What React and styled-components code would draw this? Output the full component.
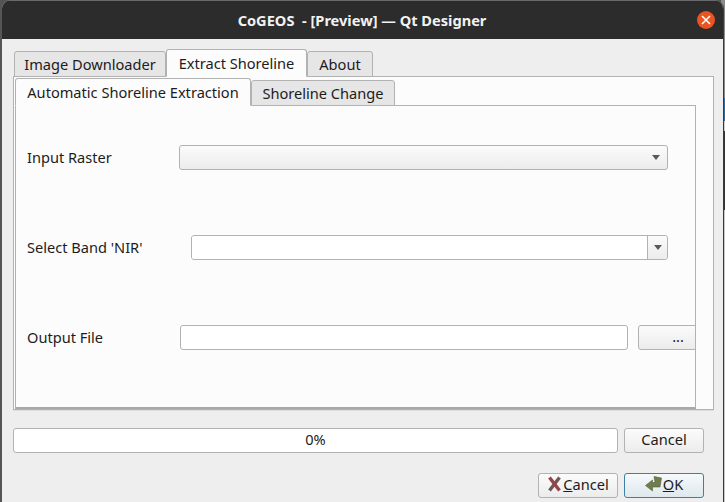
import React from "react";
import styled, { createGlobalStyle } from "styled-components";

const GlobalStyle = createGlobalStyle`
    html, body {
        margin: 0;
        padding: 0;
        width: 725px;
        height: 502px;
        overflow: hidden;
        background: #3b3b3b;
    }
    * {
        box-sizing: border-box;
    }
`;

// the desktop behind the window only shows in the last pixel column
const Screen = styled.div`
    width: 725px;
    height: 502px;
    padding-right: 1px;
    font-family: "Noto Sans", "Open Sans", sans-serif;
    font-size: 14.6px;
    color: #1c1c1c;
    background: linear-gradient(
        #8a8a8a 0 98px,
        #2a6f9e 98px 121px,
        #cfcfcf 121px 131px,
        #333333 131px 210px,
        #c8c8c8 210px
    );
`;

const Window = styled.div`
    height: 100%;
    display: flex;
    flex-direction: column;
    margin-left: 2px;
    border-radius: 9px 9px 0 0;
    border-right: 1px solid #3a3a3a;
    overflow: hidden;
    background: #eeeeee;
`;

const Desktop = styled.div`
    height: 100%;
    background: linear-gradient(90deg, #555555 0 721px, transparent 721px);
`;

const TitleBar = styled.div`
    position: relative;
    height: 39px;
    flex: none;
    display: flex;
    align-items: center;
    justify-content: center;
    padding-right: 1px;
    background: #2c2c2c;
    border-top: 1px solid #6a6a6a;
    color: #f2f2f2;
    font-weight: 700;
    white-space: pre;
`;

const CloseButton = styled.div`
    position: absolute;
    right: 8px;
    top: 10px;
    width: 18px;
    height: 18px;
    border-radius: 50%;
    background: #e95420;
    display: flex;
    align-items: center;
    justify-content: center;
`;

const Body = styled.div`
    flex: 1;
    display: flex;
    flex-direction: column;
    padding: 10px 9px 0 11px;
`;

const TabBar = styled.div`
    display: flex;
    align-items: flex-end;
    height: ${(p) => p.$height}px;
    padding-left: 1px;
    margin-bottom: -1px;
    position: relative;
    z-index: 1;
`;

const Tab = styled.div`
    width: ${(p) => p.$width}px;
    height: ${(p) => (p.$active ? p.$height + 2 : p.$height)}px;
    display: flex;
    align-items: center;
    justify-content: center;
    white-space: nowrap;
    padding-bottom: 1px;
    border: 1px solid #b2b2b2;
    border-radius: 3px 3px 0 0;
    background: ${(p) => (p.$active ? "#fcfcfc" : "#e6e6e6")};
    border-bottom-color: ${(p) => (p.$active ? "#fcfcfc" : "#b2b2b2")};
`;

const OuterPane = styled.div`
    height: 334px;
    border: 1px solid #b2b2b2;
    background: #fcfcfc;
    padding: 1px 17px 0 1px;
    box-shadow: 0 1px 0 #dcdcdc;
`;

const InnerTabBar = styled(TabBar)`
    padding-left: 0;
`;

const InnerPane = styled.div`
    height: 304px;
    border: 1px solid #b2b2b2;
    border-bottom: 2px solid #a8a8a8;
    background: #fcfcfc;
    overflow: hidden;
    padding: 39px 0 0 11px;
    display: flex;
    flex-direction: column;
    gap: 65px;
`;

const FormRow = styled.div`
    display: flex;
    align-items: center;
    height: 25px;
    flex: none;
`;

const Label = styled.div`
    width: ${(p) => p.$width}px;
    flex: none;
    padding-bottom: 2px;
    white-space: nowrap;
`;

const ComboBox = styled.div`
    width: ${(p) => p.$width}px;
    height: 25px;
    flex: none;
    display: flex;
    align-items: center;
    justify-content: flex-end;
    border: 1px solid #b2b2b2;
    border-radius: 3px;
    background: linear-gradient(#fbfbfb, #ececec);
    padding-right: 7px;
`;

const ComboField = styled.div`
    flex: 1;
    align-self: stretch;
    background: #ffffff;
    border-right: 1px solid #b2b2b2;
    border-radius: 3px 0 0 3px;
`;

const ComboDrop = styled.div`
    width: 19px;
    flex: none;
    align-self: stretch;
    display: flex;
    align-items: center;
    justify-content: center;
    background: linear-gradient(#fbfbfb, #ececec);
    border-radius: 0 3px 3px 0;
`;

const EditableCombo = styled(ComboBox)`
    padding-right: 0;
    background: #ffffff;
`;

const Arrow = styled.div`
    width: 0;
    height: 0;
    border-left: 4px solid transparent;
    border-right: 4px solid transparent;
    border-top: 5px solid #5a5a5a;
`;

const TextInput = styled.div`
    width: 448px;
    height: 25px;
    flex: none;
    background: #ffffff;
    border: 1px solid #b2b2b2;
    border-radius: 3px;
`;

const Button = styled.div`
    width: 80px;
    height: 25px;
    flex: none;
    display: flex;
    align-items: center;
    justify-content: center;
    gap: 1px;
    padding-bottom: 3px;
    border: 1px solid ${(p) => (p.$primary ? "#3f7fa6" : "#b2b2b2")};
    border-radius: 3px;
    background: ${(p) =>
        p.$primary
            ? "linear-gradient(#f5f9fb, #dfe8ee)"
            : "linear-gradient(#fbfbfb, #ececec)"};
`;

const BrowseButton = styled(Button)`
    margin-left: 10px;
`;

const ProgressRow = styled.div`
    display: flex;
    justify-content: space-between;
    width: 691px;
    margin-top: 18px;
`;

const ProgressBar = styled.div`
    width: 605px;
    height: 25px;
    display: flex;
    align-items: center;
    justify-content: center;
    padding-bottom: 3px;
    background: #ffffff;
    border: 1px solid #b2b2b2;
    border-radius: 3px;
`;

const DialogButtons = styled.div`
    display: flex;
    justify-content: flex-end;
    gap: 6px;
    width: 691px;
    margin-top: 20px;
`;

const Mnemonic = styled.span`
    text-decoration: underline;
`;

const CloseIcon = () => (
    <svg width="10" height="10" viewBox="0 0 10 10">
        <path d="M1 1L9 9M9 1L1 9" stroke="#fff" strokeWidth="1.6" />
    </svg>
);

const CancelIcon = () => (
    <svg width="15" height="16" viewBox="0 0 15 16">
        <path d="M12.5 1.5L2.5 14.5" stroke="#6e5557" strokeWidth="3.4" />
        <path d="M2.5 1.5L12.5 14.5" stroke="#9a4347" strokeWidth="3.4" />
    </svg>
);

const OkIcon = () => (
    <svg width="17" height="17" viewBox="0 0 17 17">
        <path
            d="M9 0.5L16.5 2L15 11L7.5 11L7.5 15L0.5 9.5L7.5 4L7.5 6.5L10 6.5Z"
            fill="#6f7d4c"
            stroke="#566139"
            strokeWidth="0.6"
        />
    </svg>
);

const App = () => {
    return (
        <Screen>
            <GlobalStyle />
            <Desktop>
                <Window>
                    <TitleBar>
                        {"CoGEOS  - [Preview] — Qt Designer"}
                        <CloseButton>
                            <CloseIcon />
                        </CloseButton>
                    </TitleBar>
                    <Body>
                        <TabBar $height={28}>
                            <Tab $width={152} $height={26}>Image Downloader</Tab>
                            <Tab $width={141} $height={26} $active>Extract Shoreline</Tab>
                            <Tab $width={66} $height={26}>About</Tab>
                        </TabBar>
                        <OuterPane>
                            <InnerTabBar $height={28}>
                                <Tab $width={236} $height={26} $active>Automatic Shoreline Extraction</Tab>
                                <Tab $width={144} $height={26}>Shoreline Change</Tab>
                            </InnerTabBar>
                            <InnerPane>
                                <FormRow>
                                    <Label $width={152}>Input Raster</Label>
                                    <ComboBox $width={489}>
                                        <Arrow />
                                    </ComboBox>
                                </FormRow>
                                <FormRow>
                                    <Label $width={164}>Select Band 'NIR'</Label>
                                    <EditableCombo $width={477}>
                                        <ComboField />
                                        <ComboDrop>
                                            <Arrow />
                                        </ComboDrop>
                                    </EditableCombo>
                                </FormRow>
                                <FormRow>
                                    <Label $width={153}>Output File</Label>
                                    <TextInput />
                                    <BrowseButton>...</BrowseButton>
                                </FormRow>
                            </InnerPane>
                        </OuterPane>
                        <ProgressRow>
                            <ProgressBar>0%</ProgressBar>
                            <Button>Cancel</Button>
                        </ProgressRow>
                        <DialogButtons>
                            <Button>
                                <CancelIcon />
                                <span><Mnemonic>C</Mnemonic>ancel</span>
                            </Button>
                            <Button $primary>
                                <OkIcon />
                                <span><Mnemonic>O</Mnemonic>K</span>
                            </Button>
                        </DialogButtons>
                    </Body>
                </Window>
            </Desktop>
        </Screen>
    );
};

export default App;
